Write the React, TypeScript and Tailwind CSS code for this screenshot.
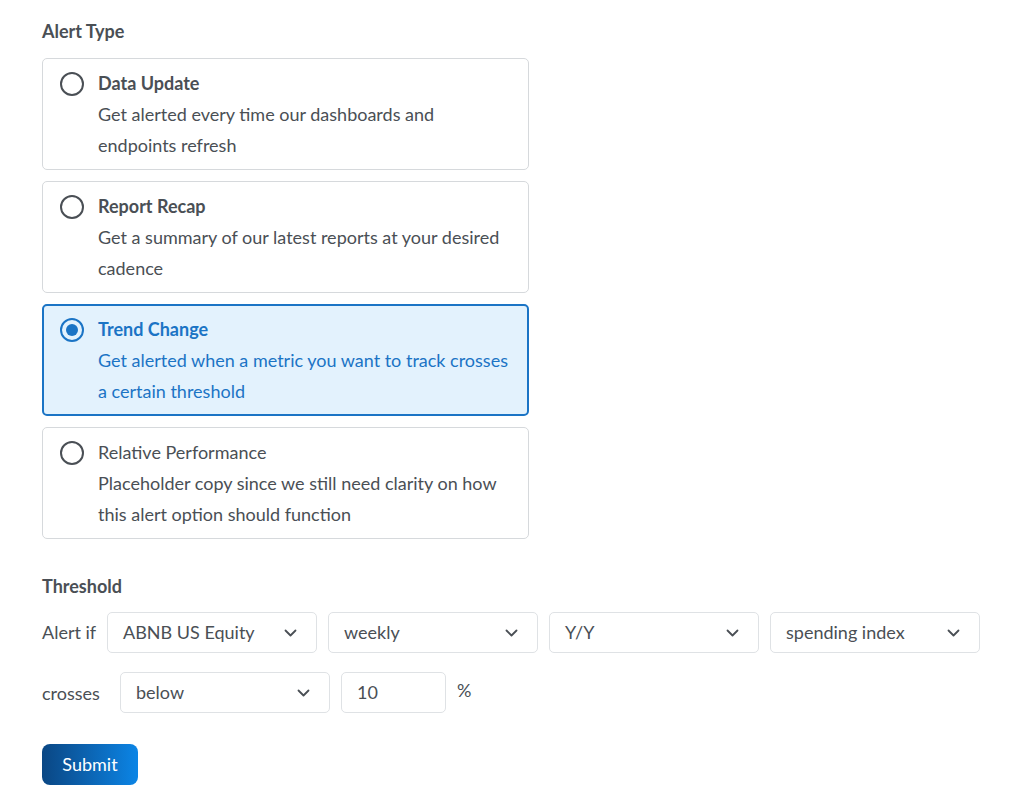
import { useState } from "react";

const options = [
  {
    id: "data",
    title: "Data Update",
    body: "Get alerted every time our dashboards and endpoints refresh",
    bold: true,
  },
  {
    id: "recap",
    title: "Report Recap",
    body: "Get a summary of our latest reports at your desired cadence",
    bold: true,
  },
  {
    id: "trend",
    title: "Trend Change",
    body: "Get alerted when a metric you want to track crosses a certain threshold",
    bold: true,
  },
  {
    id: "relative",
    title: "Relative Performance",
    body: "Placeholder copy since we still need clarity on how this alert option should function",
    bold: false,
  },
];

function Chevron() {
  return (
    <svg width="13" height="8" viewBox="0 0 13 8" fill="none" className="shrink-0">
      <path d="M1.5 1.5 6.5 6.5 11.5 1.5" stroke="#4a4f55" strokeWidth="1.8" strokeLinecap="round" strokeLinejoin="round" />
    </svg>
  );
}

function Select({ value }: { value: string }) {
  return (
    <div className="flex h-[41px] w-[210px] shrink-0 items-center justify-between rounded-[5px] border border-[#dfe2e5] bg-white pl-[15px] pr-[19px] text-[18px] text-[#4a4f55]">
      <span>{value}</span>
      <Chevron />
    </div>
  );
}

export default function App() {
  const [selected, setSelected] = useState("trend");

  return (
    <main className="min-h-screen bg-white px-[42px] pt-[19px] font-['Lato','Noto_Sans',sans-serif] text-[#4a4f55]">
      {/* Alert type */}
      <h2 className="mb-[15px] text-[18px] font-bold leading-[24px]">Alert Type</h2>
      <div className="flex w-[487px] flex-col gap-[11px]">
        {options.map((o) => {
          const active = o.id === selected;
          return (
            <button
              key={o.id}
              onClick={() => setSelected(o.id)}
              className={
                active
                  ? "flex h-[112px] items-start gap-[14px] rounded-[5px] border-2 border-[#1b74c5] bg-[#e3f2fd] pl-[16px] pr-[16px] pt-[8px] text-left text-[#1b74c5]"
                  : "flex h-[112px] items-start gap-[14px] rounded-[5px] border border-[#d6d9dc] bg-white pl-[17px] pr-[17px] pt-[9px] text-left"
              }
            >
              <span className="flex h-[31px] items-center">
                {active ? (
                  <span className="flex h-[24px] w-[24px] items-center justify-center rounded-full border-[2.5px] border-[#1b74c5]">
                    <span className="h-[12px] w-[12px] rounded-full bg-[#1b74c5]" />
                  </span>
                ) : (
                  <span className="h-[24px] w-[24px] rounded-full border-[2.5px] border-[#4a4f55]" />
                )}
              </span>
              <span className="flex flex-col text-[18px] leading-[31px]">
                <span className={o.bold ? "font-bold" : ""}>{o.title}</span>
                <span>{o.body}</span>
              </span>
            </button>
          );
        })}
      </div>

      {/* Threshold */}
      <h2 className="mb-[14px] mt-[35px] text-[18px] font-bold leading-[24px]">Threshold</h2>
      <div className="flex items-center gap-[11px] text-[18px]">
        <span className="w-[54px] shrink-0 whitespace-nowrap">Alert if</span>
        <Select value="ABNB US Equity" />
        <Select value="weekly" />
        <Select value="Y/Y" />
        <Select value="spending index" />
      </div>
      <div className="mt-[19px] flex items-center gap-[11px] text-[18px]">
        <span className="w-[67px] shrink-0 pt-[2px]">crosses</span>
        <Select value="below" />
        <div className="flex h-[41px] w-[105px] items-center rounded-[5px] border border-[#dfe2e5] pl-[15px]">
          10
        </div>
        <span className="pb-[4px]">%</span>
      </div>

      <button className="mt-[31px] h-[41px] w-[96px] rounded-[8px] bg-gradient-to-r from-[#0a4784] to-[#0b85e6] text-[18px] text-white">
        Submit
      </button>
    </main>
  );
}
